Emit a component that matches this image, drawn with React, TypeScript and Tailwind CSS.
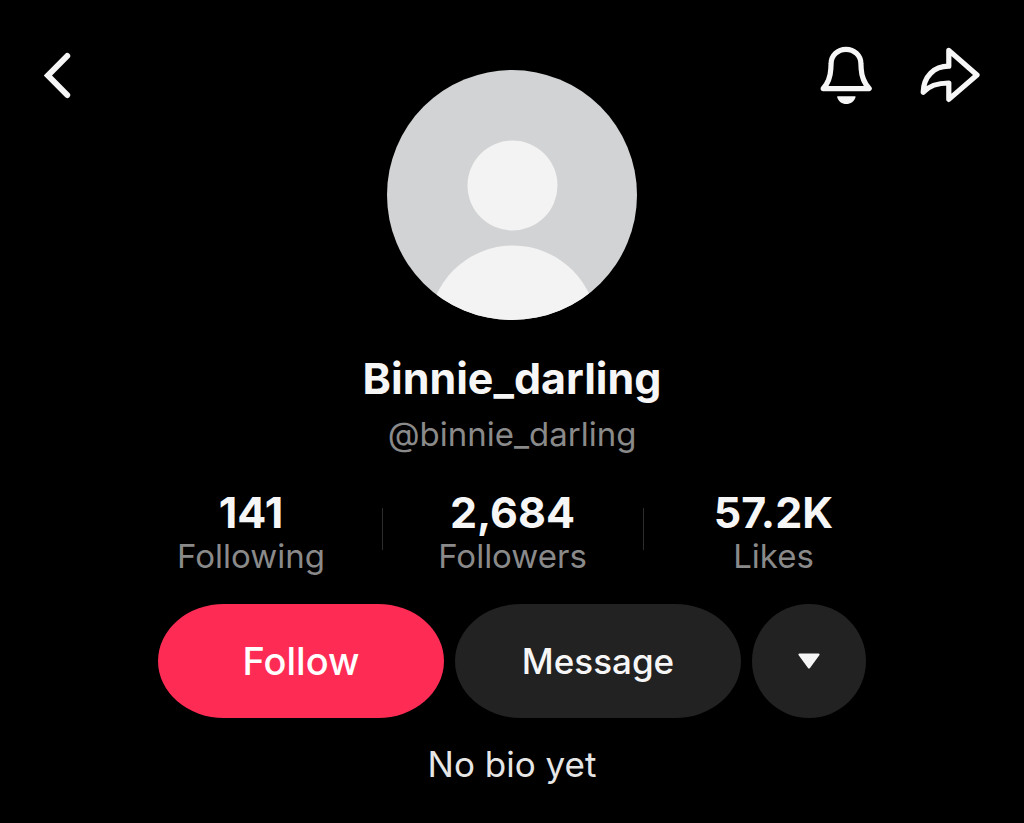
import React from 'react';

const stats = [
  { value: '141', label: 'Following' },
  { value: '2,684', label: 'Followers' },
  { value: '57.2K', label: 'Likes' },
];

const BackIcon: React.FC = () => (
  <svg className="h-[58px] w-7" viewBox="0 0 28 58" fill="none" stroke="currentColor" strokeWidth="6" strokeLinecap="round" strokeLinejoin="miter">
    <path d="M23.200 10 3.900 29.500 23.200 49" />
  </svg>
);

const BellIcon: React.FC = () => (
  <svg className="h-[58px] w-[52px] overflow-visible" viewBox="0 0 52 58" fill="none">
    <path
      d="M3.200 42.600C8.300 37 10.400 31 10.800 23L11.100 17.500A14.900 14.200 0 0 1 40.900 17.500L41.200 23C41.600 31 44.200 37 49.200 42.600Z"
      stroke="currentColor"
      strokeWidth="5.2"
      strokeLinejoin="round"
    />
    <path d="M17.900 50.200H34.800C35.400 50.200 35.700 50.600 35.500 51.200C34.300 55.400 30.700 58 26.300 58S18.400 55.400 17.200 51.200C17 50.600 17.300 50.200 17.900 50.200Z" fill="currentColor" />
  </svg>
);

const ShareIcon: React.FC = () => (
  <svg className="h-[58px] w-[60px] overflow-visible" viewBox="0 0 60 58" fill="none" stroke="currentColor" strokeWidth="5.2" strokeLinejoin="round">
    <path d="M28.800 4.400 57 29 28.800 53.400V37C18.300 37 9.500 39.200 3.200 46.300C3.600 30.500 13.800 20.200 28.800 20.200Z" />
  </svg>
);

const Avatar: React.FC = () => (
  <svg className="size-[250px] rounded-full bg-[#d1d3d4] text-[#f3f3f3]" viewBox="0 0 250 250" fill="currentColor" role="img" aria-label="Profile photo">
    <circle cx="125.500" cy="115.500" r="45" />
    <circle cx="126" cy="259.500" r="84" />
  </svg>
);

const App: React.FC = () => {
  return (
    <div className="min-h-screen bg-black pb-9 font-['Inter','Liberation_Sans',sans-serif] text-[#f6f6f6]">
      {/* Top bar with avatar */}
      <header className="grid grid-cols-[1fr_auto_1fr] items-start px-11 pt-[46px]">
        <button type="button" aria-label="Back" className="justify-self-start">
          <BackIcon />
        </button>
        <div className="pt-6">
          <Avatar />
        </div>
        <div className="flex gap-12 justify-self-end">
          <button type="button" aria-label="Notifications">
            <BellIcon />
          </button>
          <button type="button" aria-label="Share">
            <ShareIcon />
          </button>
        </div>
      </header>

      <main className="flex flex-col items-center">
        <h1 className="mt-[30px] text-[43px] leading-14 font-bold">Binnie_darling</h1>
        <p className="mt-1 text-[33px] leading-12 text-[#8a8a8a]">@binnie_darling</p>

        {/* Stats */}
        <dl className="mt-[30px] grid w-full max-w-[783px] grid-cols-3">
          {stats.map((stat, index) => (
            <div key={stat.label} className="flex">
              {index > 0 && <span className="mt-5 h-[42px] w-px shrink-0 bg-[#2c2c2c]" />}
              <div className="flex grow flex-col-reverse text-center">
                <dt className="text-[33px] leading-10 text-[#8a8a8a]">{stat.label}</dt>
                <dd className="text-[43px] leading-12 font-bold">{stat.value}</dd>
              </div>
            </div>
          ))}
        </dl>

        {/* Actions */}
        <div className="mt-7 flex gap-[11px]">
          <button type="button" className="h-[114px] w-[286px] rounded-[66px/57px] bg-[#fe2c55] text-[38px] font-medium text-white">
            Follow
          </button>
          <button type="button" className="h-[114px] w-[286px] rounded-[66px/57px] bg-[#222222] text-[35px] font-medium">
            Message
          </button>
          <button type="button" aria-label="Suggested accounts" className="flex size-[114px] items-center justify-center rounded-full bg-[#222222]">
            <svg className="h-4 w-[22px]" viewBox="0 0 22 16" fill="currentColor">
              <path d="M1.500 0.500H20.500C21.500 0.500 21.900 1.400 21.300 2.200L12 14.900C11.400 15.700 10.600 15.700 10 14.900L0.700 2.200C0.100 1.400 0.500 0.500 1.500 0.500Z" />
            </svg>
          </button>
        </div>

        <p className="mt-[22px] text-[35px] leading-12 text-[#e6e6e6]">No bio yet</p>
      </main>
    </div>
  );
};

export default App;
